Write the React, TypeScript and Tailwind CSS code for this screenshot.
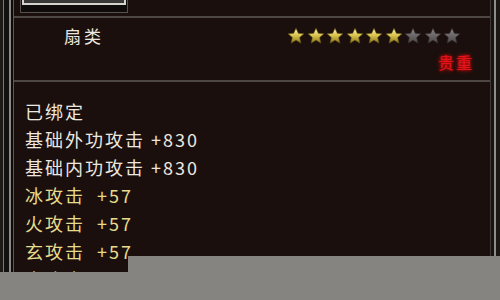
import React from 'react';

const font = { fontFamily: '"Noto Sans CJK SC", "Noto Sans", sans-serif' };

function Star({ gold }: { gold: boolean }) {
  const id = gold ? 'sg' : 'sx';
  return (
    <svg width="18" height="18" viewBox="0 0 24 24">
      <defs>
        <linearGradient id={id} x1="0" y1="0" x2="0" y2="1">
          {gold ? (
            <>
              <stop offset="0" stopColor="#fff6b8" />
              <stop offset="0.5" stopColor="#d8c24a" />
              <stop offset="1" stopColor="#8a7420" />
            </>
          ) : (
            <>
              <stop offset="0" stopColor="#8a8688" />
              <stop offset="1" stopColor="#4c4648" />
            </>
          )}
        </linearGradient>
      </defs>
      <path
        d="M12 1.5l3.1 6.9 7.4.7-5.6 5 1.7 7.4L12 17.6l-6.6 3.9 1.7-7.4-5.6-5 7.4-.7z"
        fill={`url(#${id})`}
        stroke={gold ? '#5a4a10' : '#2e2a2a'}
        strokeWidth="0.8"
      />
    </svg>
  );
}

const lines: { label: string; value: string; yellow?: boolean }[] = [
  { label: '基础外功攻击', value: '+830' },
  { label: '基础内功攻击', value: '+830' },
  { label: '冰攻击', value: '+57', yellow: true },
  { label: '火攻击', value: '+57', yellow: true },
  { label: '玄攻击', value: '+57', yellow: true },
  { label: '毒攻击', value: '+57', yellow: true },
];

export default function App() {
  return (
    <div className="relative w-[500px] h-[300px] overflow-hidden bg-[#1a0f0c] flex" style={font}>
      {/* left frame */}
      <div className="flex h-full">
        <div className="w-[3px] bg-[#1c1917]" />
        <div className="w-px bg-[#7c7975]" />
        <div className="w-[5px] bg-[#131010]" />
        <div className="w-[2px] bg-[#8c8a86]" />
        <div className="w-[2px] bg-[#0d0a09]" />
        <div className="w-px bg-[#5c5854]" />
      </div>

      {/* main panel */}
      <div className="flex-1 flex flex-col">
        <div className="h-[16px] flex items-start pl-[6px]">
          <div className="w-[108px] h-[13px] border-b border-l border-r border-[#55514d] bg-[#0f0b0a] px-[1px]">
            <div className="h-[5px] border-b-2 border-l-2 border-r-2 border-[#d4d2cc] bg-[#3a3836]" />
          </div>
        </div>
        <div className="h-[66px] border-t-2 border-[#4c4743] border-b-2 border-b-[#4c4743] relative">
          <div className="flex items-start justify-between pt-[8px] pl-[50px] pr-[29px]">
            <span className="text-[17px] leading-[20px] tracking-[3px] text-[#ece8e0]">扇类</span>
            <div className="flex gap-[1.5px] pt-[1px]">
              {Array.from({ length: 9 }).map((_, i) => (
                <Star key={i} gold={i < 6} />
              ))}
            </div>
          </div>
          <div className="flex justify-end pr-[16px] mt-[6px]">
            <span
              className="text-[16px] leading-[20px] tracking-[2px] text-[#e0141c]"
              style={{ textShadow: '0 0 4px #ff1010, 0 0 2px #a00000' }}
            >
              贵重
            </span>
          </div>
        </div>
        <div className="flex-1 pl-[11px] pt-[15px] text-[18px] leading-[28px] tracking-[2px]">
          <div className="text-[#ece8e0]">已绑定</div>
          {lines.map((l) => (
            <div key={l.label} className={l.yellow ? 'flex text-[#e6dc8e]' : 'flex text-[#ece8e0]'}>
              <span>{l.label}</span>
              <span className={l.yellow ? 'ml-[12px]' : 'ml-[6px]'}>{l.value}</span>
            </div>
          ))}
        </div>
      </div>

      {/* right frame */}
      <div className="flex h-full">
        <div className="w-px bg-[#3e3936]" />
        <div className="w-[3px] bg-[#181312]" />
        <div className="w-[2px] bg-[#8e8c88]" />
        <div className="w-[4px] bg-[#1a1715]" />
      </div>

      {/* grey blocks covering the lower part */}
      <div className="absolute left-[128px] right-0 top-[256px] bottom-0 bg-[#858481]" />
      <div className="absolute left-0 right-0 top-[272px] bottom-0 bg-[#858481]" />
    </div>
  );
}
